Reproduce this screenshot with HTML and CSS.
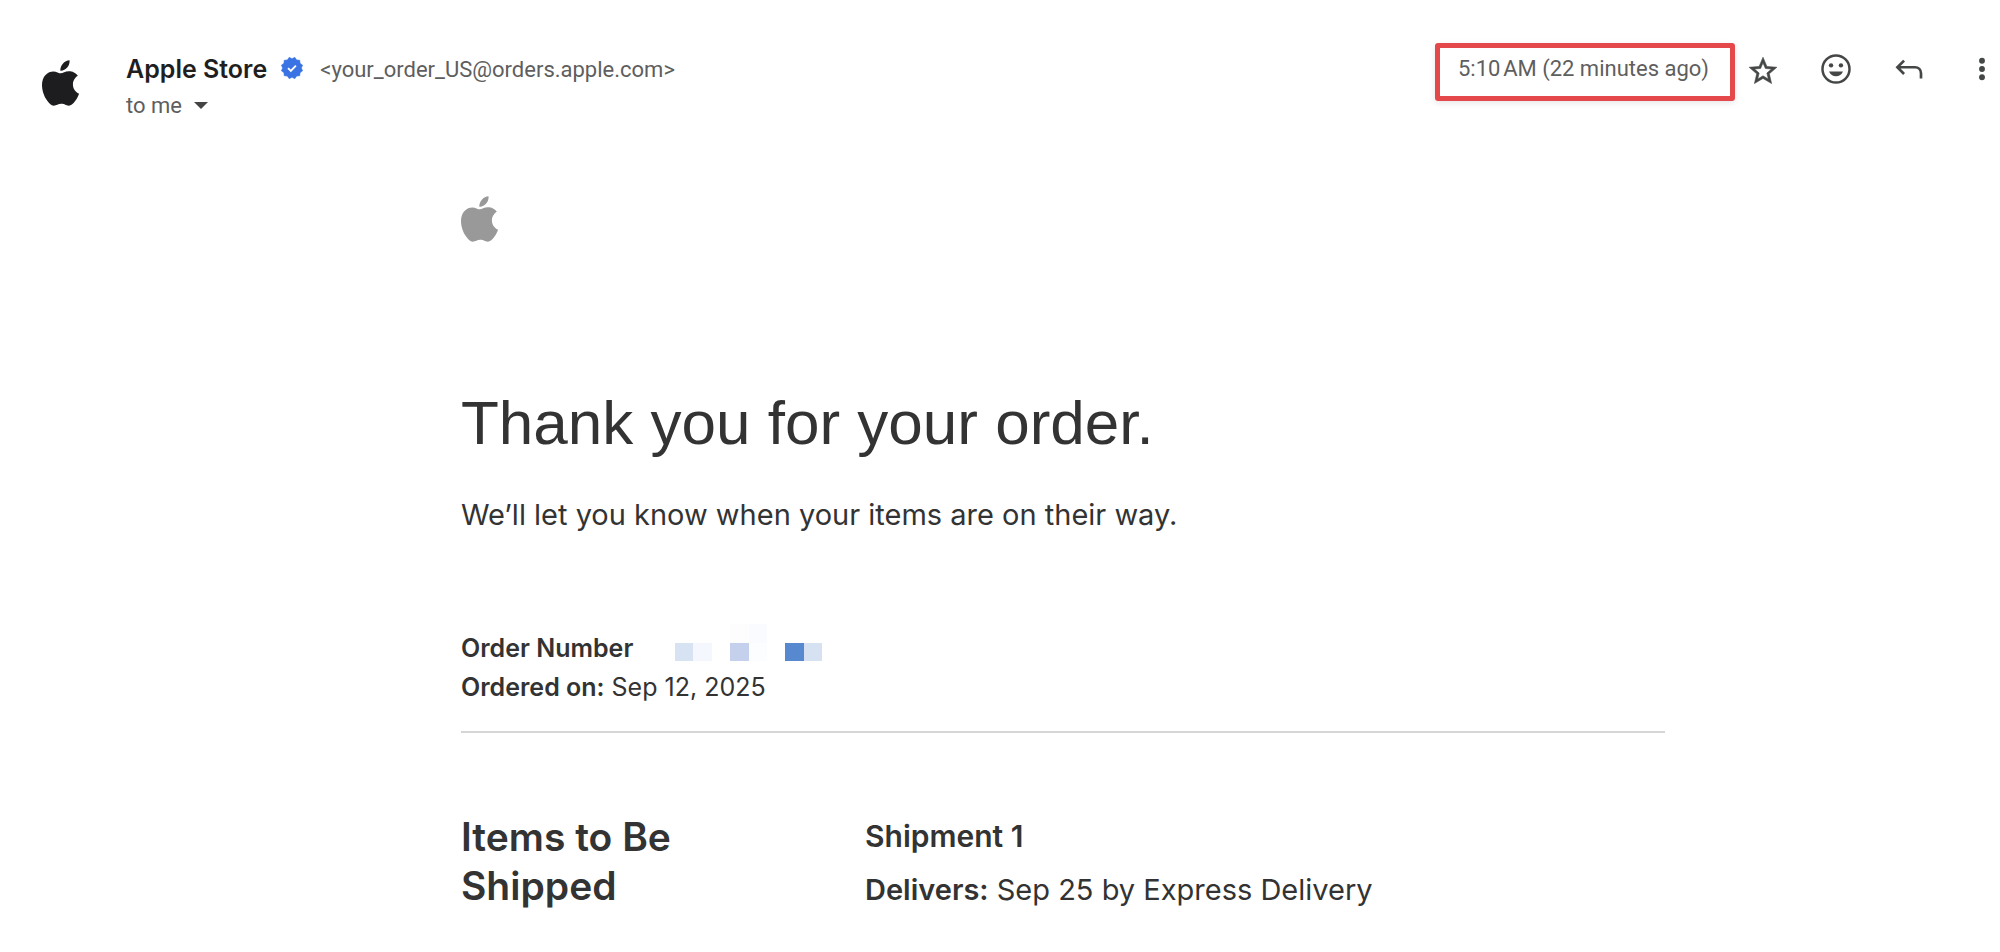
FILE: index.html
```
<!DOCTYPE html>
<html lang="en">
<head>
  <meta charset="UTF-8" />
  <meta name="viewport" content="width=device-width, initial-scale=1.0"/>
  <title>Apple Store | Thank you for your order</title>
  <link rel="stylesheet" href="styles.css">
</head>
<body>

  <!-- Apple shape, shared by the avatar and the email logo -->
  <svg class="sprite" aria-hidden="true">
    <symbol id="apple" viewBox="0 0 814 1000">
      <path d="M788.1 340.9c-5.8 4.500-108.200 62.200-108.200 190.500 0 148.400 130.300 200.900 134.200 202.200-.6 3.200-20.700 71.900-68.700 141.900-42.800 61.600-87.500 123.100-155.500 123.100s-85.500-39.500-164-39.500c-76.500 0-103.700 40.800-165.900 40.800s-105.600-57-155.500-127C46.700 790.700 0 663 0 541.800c0-194.400 126.400-297.500 250.800-297.500 66.100 0 121.200 43.400 162.700 43.400 39.500 0 101.100-46 176.300-46 28.500 0 130.900 2.600 198.300 99.200zm-234-181.500c31.100-36.900 53.100-88.100 53.100-139.300 0-7.100-.6-14.300-1.900-20.100-50.600 1.900-110.800 33.700-147.100 75.800-28.500 32.400-55.100 83.600-55.100 135.500 0 7.800 1.300 15.600 1.900 18.100 3.200.6 8.400 1.300 13.600 1.300 45.400 0 102.500-30.400 135.500-71.300z"/>
    </symbol>
  </svg>

  <!-- Message header -->
  <header class="mail-header">
    <svg class="avatar" role="img" aria-label="Apple Store"><use href="#apple"/></svg>
    <div class="sender">
      <div class="from">
        <span class="name">Apple Store</span>
        <svg class="badge" viewBox="0 0 24 24" role="img" aria-label="Verified">
          <path fill="#3a73e4" stroke="#3a73e4" stroke-width=".6" stroke-linejoin="round" d="M23.600 15.100L20.800 17.100 20.500 20.500 17.100 20.800 15.100 23.600 12 22.200 8.900 23.600 6.900 20.800 3.500 20.500 3.200 17.100.4 15.100 1.800 12 .4 8.900 3.200 6.900 3.500 3.500 6.900 3.200 8.900.4 12 1.800 15.100.4 17.100 3.200 20.500 3.500 20.800 6.900 23.600 8.900 22.200 12z"/>
          <path fill="none" stroke="#fff" stroke-width="2" d="M7.700 12.100l3 3 5.600-5.700"/>
        </svg>
        <span class="address">&lt;your_order_US@orders.apple.com&gt;</span>
      </div>
      <button class="details" type="button">to me <span class="caret"></span></button>
    </div>
    <div class="time">5:10&#8239;AM (22 minutes ago)</div>
    <div class="actions">
      <button type="button" aria-label="Star">
        <svg viewBox="0.500 -1 23 23"><path d="M22 9.240l-7.190-.62L12 2 9.190 8.630 2 9.240l5.460 4.730L5.820 21 12 17.270 18.180 21l-1.630-7.030L22 9.240zM12 15.400l-3.760 2.270 1-4.280-3.320-2.880 4.380-.38L12 6.100l1.710 4.040 4.380.38-3.320 2.880 1 4.280L12 15.400z" stroke="currentColor" stroke-width=".4"/></svg>
      </button>
      <button type="button" aria-label="Add reaction">
        <svg viewBox="1 1 22 22"><circle cx="12" cy="12" r="9.300" fill="none" stroke="currentColor" stroke-width="1.700"/><circle cx="8.600" cy="9.500" r="1.500"/><circle cx="15.400" cy="9.500" r="1.500"/><path d="M7.200 13.700h9.600c-.8 2.100-2.600 3.300-4.800 3.300s-4-1.200-4.800-3.300z"/></svg>
      </button>
      <button type="button" aria-label="Reply">
        <svg viewBox="0 -.5 24 24"><path fill="none" stroke="currentColor" stroke-width="2" d="M8.300 5.200L3.300 10.200l5 5M3.300 10.200h13.200c2.600 0 4.500 1.900 4.500 4.500v4"/></svg>
      </button>
      <button type="button" aria-label="More">
        <svg viewBox="0 0 24 24"><circle cx="12" cy="5.800" r="2.200"/><circle cx="12" cy="12" r="2.200"/><circle cx="12" cy="18.200" r="2.200"/></svg>
      </button>
    </div>
  </header>

  <!-- Email body -->
  <main class="mail-body">
    <div class="email">
      <svg class="email-logo" role="img" aria-label="Apple"><use href="#apple"/></svg>
      <h1>Thank you for your order.</h1>
      <p class="intro">We’ll let you know when your items are on their way.</p>

      <div class="order-info">
        <div class="order-number">
          <strong>Order Number</strong>
          <!-- Redacted number -->
          <svg class="mosaic" viewBox="0 0 8 2" shape-rendering="crispEdges" role="img" aria-label="Hidden order number">
            <path fill="#fdfdfe" d="M3 0h1v1H3z"/>
            <path fill="#fafbfe" d="M4 0h1v1H4z"/>
            <path fill="#d7e3f2" d="M0 1h1v1H0z"/>
            <path fill="#f4f8fe" d="M1 1h1v1H1z"/>
            <path fill="#c5d1ec" d="M3 1h1v1H3z"/>
            <path fill="#fcfdfe" d="M4 1h1v1H4z"/>
            <path fill="#5689cf" d="M6 1h1v1H6z"/>
            <path fill="#d6e1f2" d="M7 1h1v1H7z"/>
          </svg>
        </div>
        <div><strong>Ordered on:</strong> Sep 12, 2025</div>
      </div>

      <section class="items">
        <h2>Items to Be Shipped</h2>
        <div class="shipment">
          <h3>Shipment 1</h3>
          <p><strong>Delivers:</strong> Sep 25 by Express Delivery</p>
        </div>
      </section>
    </div>
  </main>

</body>
</html>
```
FILE: styles.css
```
/* Reset & Base */
* { margin: 0; padding: 0; box-sizing: border-box; }
body {
  font-family: Inter, 'Liberation Sans', sans-serif;
  color: #333;
  background: #fff;
  overflow-x: hidden;
}
button { border: 0; background: none; font: inherit; color: inherit; cursor: pointer; }
svg { display: block; flex: none; fill: currentColor; }
strong { font-weight: 600; }
.sprite { position: absolute; width: 0; height: 0; }

/* Message header */
.mail-header {
  display: flex;
  align-items: flex-start;
  padding: 43px 2px 0 42px;
  color: #5e5e5e;
  font-size: 22px;
}
.avatar { width: 37px; height: 46px; margin-top: 17px; color: #1d1d1f; }
.sender { flex: 1; margin-left: 47px; padding-top: 10px; }
.from { display: flex; align-items: center; height: 32px; }
.name { font-size: 25px; font-weight: 600; color: #1f1f1f; }
.badge { width: 22px; height: 22px; margin: 0 17px 3px 14px; overflow: visible; }
.address, .details, .time { font-family: Roboto, sans-serif; }
.details { display: flex; align-items: center; height: 40px; gap: 12px; }
.caret { border: 7px solid transparent; border-top-color: #444; border-bottom: 0; }
.time {
  border: 5px solid #e5484b;
  border-radius: 3px;
  height: 58px;
  padding: 0 21px 0 18px;
  line-height: 42px;
  box-shadow: 0 2px 6px rgba(0,0,0,0.1);
}
.actions { display: flex; gap: 41px; padding: 10px 0 0 12px; color: #444746; }
.actions svg { width: 32px; height: 32px; }

/* Email body */
.mail-body { margin-left: 126px; }
.email { max-width: 1204px; margin: 0 auto; padding-top: 71px; }
.email-logo { width: 37px; height: 46px; color: #999; }
h1 {
  margin-top: 145px;
  font: 400 62px/72px 'Liberation Sans', sans-serif;
}
.intro { margin-top: 36px; font-size: 29px; line-height: 40px; }
.order-info {
  margin-top: 93px;
  padding-bottom: 24px;
  border-bottom: 2px solid #d6d6d6;
  font-size: 25px;
  line-height: 39px;
}
.order-number { display: flex; align-items: flex-end; height: 40px; gap: 42px; }
.mosaic { width: 147px; height: 37px; margin-bottom: 7px; }

/* Items */
.items { display: grid; grid-template-columns: 404px 1fr; padding-top: 79px; }
h2 { max-width: 260px; font-size: 39px; line-height: 49px; font-weight: 600; }
.shipment { font-size: 29px; line-height: 53px; margin-top: -2px; }
h3 { font-size: 30px; font-weight: 600; }
```
